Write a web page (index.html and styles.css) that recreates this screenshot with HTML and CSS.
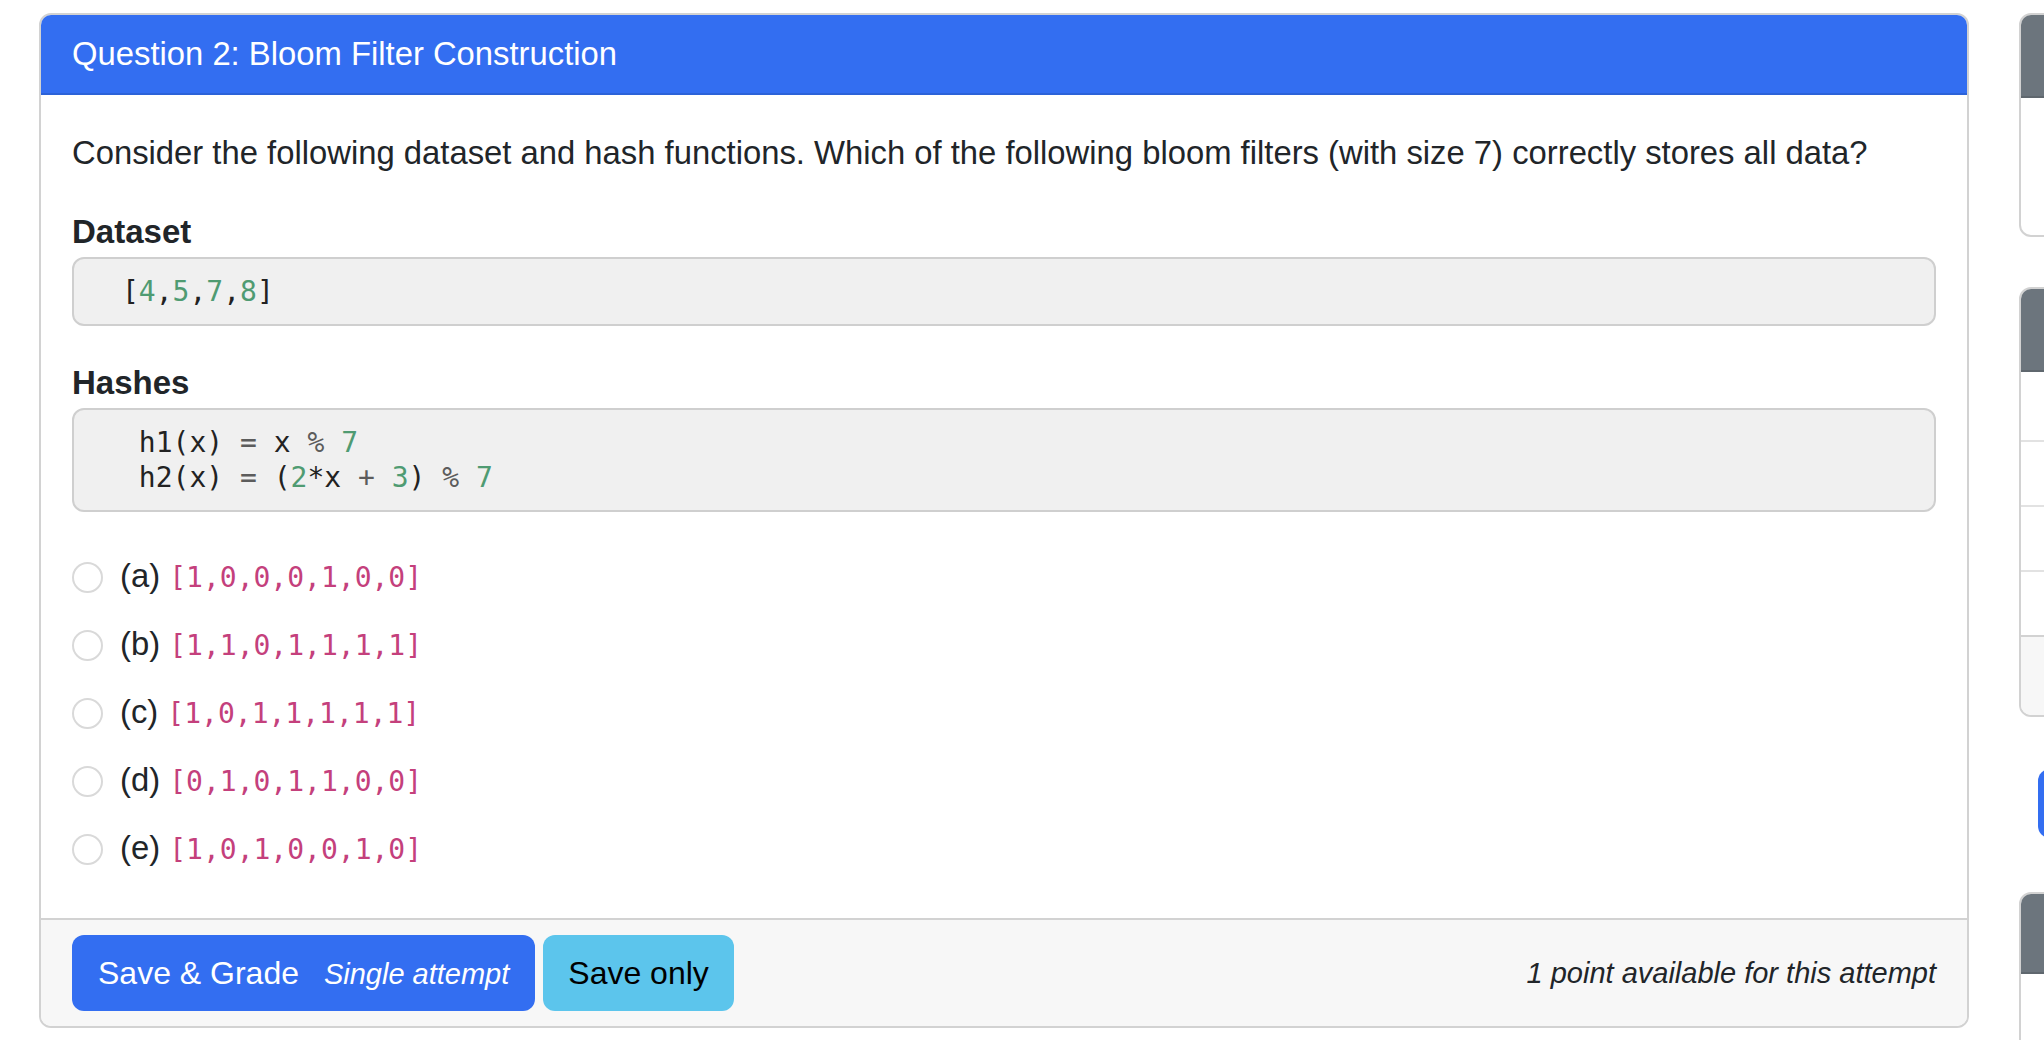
FILE: index.html
```html
<!DOCTYPE html>
<html lang="en">
<head>
<meta charset="utf-8">
<title>Question 2: Bloom Filter Construction</title>
<link rel="stylesheet" href="styles.css">
</head>
<body>
<div class="page">
  <main class="main">
    <div class="card">
      <div class="card-header">Question 2: Bloom Filter Construction</div>
      <div class="card-body">
        <p class="prompt">Consider the following dataset and hash functions. Which of the following bloom filters (with size 7) correctly stores all data?</p>
        <h3 class="label">Dataset</h3>
        <pre class="code dataset">[<span class="num">4</span>,<span class="num">5</span>,<span class="num">7</span>,<span class="num">8</span>]</pre>
        <h3 class="label">Hashes</h3>
        <pre class="code hashes"> h1(x) <span class="op">=</span> x <span class="op">%</span> <span class="num">7</span>
 h2(x) <span class="op">=</span> (<span class="num">2</span>*x <span class="op">+</span> <span class="num">3</span>) <span class="op">%</span> <span class="num">7</span></pre>
        <div class="options">
          <label class="option"><span class="radio"></span><span class="opt-text">(a) <code>[1,0,0,0,1,0,0]</code></span></label>
          <label class="option"><span class="radio"></span><span class="opt-text">(b) <code>[1,1,0,1,1,1,1]</code></span></label>
          <label class="option"><span class="radio"></span><span class="opt-text">(c) <code>[1,0,1,1,1,1,1]</code></span></label>
          <label class="option"><span class="radio"></span><span class="opt-text">(d) <code>[0,1,0,1,1,0,0]</code></span></label>
          <label class="option"><span class="radio"></span><span class="opt-text">(e) <code>[1,0,1,0,0,1,0]</code></span></label>
        </div>
      </div>
      <div class="card-footer">
        <button class="btn btn-primary">Save &amp; Grade <span class="btn-sub">Single attempt</span></button>
        <button class="btn btn-info">Save only</button>
        <span class="note">1 point available for this attempt</span>
      </div>
    </div>
  </main>
  <aside class="side">
    <div class="side-card side-card-1">
      <div class="side-header"></div>
    </div>
    <div class="side-card side-card-2">
      <div class="side-header"></div>
      <div class="side-gap"></div>
      <div class="side-row"></div>
      <div class="side-row"></div>
      <div class="side-row last"></div>
      <div class="side-footer"></div>
    </div>
    <div class="side-btn"></div>
    <div class="side-card side-card-3">
      <div class="side-header short"></div>
    </div>
  </aside>
</div>
</body>
</html>
```
FILE: styles.css
```css
html, body {
  margin: 0;
  padding: 0;
  overflow: hidden;
  background: #ffffff;
}

body {
  font-family: "Liberation Sans", Arial, Helvetica, sans-serif;
  font-size: 32.8px;
  line-height: 48px;
  color: #212529;
}

.page {
  display: flex;
  align-items: flex-start;
  gap: 50px;
  padding: 13px 0 0 39px;
  width: max-content;
}

.main {
  flex: none;
  width: 1930px;
}

.card {
  border: 2px solid #d2d2d2;
  border-radius: 12px;
  overflow: hidden;
  background: #fff;
}

.card-header {
  background: #336ef1;
  color: #ffffff;
  padding: 15px 31px;
  border-bottom: 2px solid #2c62d8;
}

.card-body {
  padding: 34px 31px 45px;
}

.prompt {
  margin: 0 0 31px;
}

.label {
  margin: 0 0 1px;
  font-size: 33px;
  line-height: 48px;
  font-weight: 700;
}

.code {
  margin: 0 0 33px;
  background: #f0f0f0;
  border: 2px solid #cfcfcf;
  border-radius: 12px;
  padding: 15px 48px;
  font-family: "DejaVu Sans Mono", "Liberation Mono", monospace;
  font-size: 28px;
  line-height: 35px;
  color: #222;
}

.code.hashes {
  margin-bottom: 32px;
}

.num {
  color: #4f9b72;
}

.op {
  color: #5c5c5c;
}

.options {
  display: flex;
  flex-direction: column;
  gap: 20px;
  padding-top: 9px;
}

.option {
  display: flex;
  align-items: center;
  height: 48px;
}

.radio {
  flex: none;
  width: 27px;
  height: 27px;
  border: 2px solid #d9d9d9;
  border-radius: 50%;
  margin-right: 17px;
  background: #fff;
}

.opt-text code {
  font-family: "DejaVu Sans Mono", "Liberation Mono", monospace;
  font-size: 28px;
  color: #c4407c;
}

.card-footer {
  display: flex;
  align-items: center;
  background: #f7f7f7;
  border-top: 2px solid #d2d2d2;
  padding: 15px 31px;
}

.btn {
  height: 76px;
  border: none;
  border-radius: 12px;
  padding: 0 26px;
  font-family: "Liberation Sans", Arial, Helvetica, sans-serif;
  font-size: 32px;
  line-height: 48px;
}

.btn-primary {
  background: #336ef1;
  color: #ffffff;
}

.btn-sub {
  font-style: italic;
  font-size: 29px;
  margin-left: 16px;
}

.btn-info {
  background: #5cc5ec;
  color: #000;
  margin-left: 8px;
  padding: 0 25px;
}

.note {
  margin-left: auto;
  font-style: italic;
  font-size: 29px;
}

/* right-hand sidebar, cut off by the window */
.side {
  flex: none;
  width: 400px;
  display: flex;
  flex-direction: column;
}

.side-card {
  border: 2px solid #d2d2d2;
  border-radius: 12px;
  overflow: hidden;
  background: #fff;
}

.side-header {
  height: 81px;
  background: #6c757d;
  border-bottom: 2px solid #5f676e;
}

.side-header.short {
  height: 78px;
}

.side-card-1 {
  height: 220px;
}

.side-card-2 {
  margin-top: 50px;
}

.side-gap {
  height: 68px;
  border-bottom: 2px solid #e2e2e2;
}

.side-row {
  height: 63px;
  border-bottom: 2px solid #e2e2e2;
}

.side-row.last {
  border-bottom-color: #d2d2d2;
}

.side-footer {
  height: 78px;
  background: #f7f7f7;
}

.side-btn {
  margin: 52px 0 0 19px;
  height: 69px;
  width: 300px;
  border-radius: 12px;
  background: #336ef1;
}

.side-card-3 {
  margin-top: 54px;
  height: 300px;
}
```
